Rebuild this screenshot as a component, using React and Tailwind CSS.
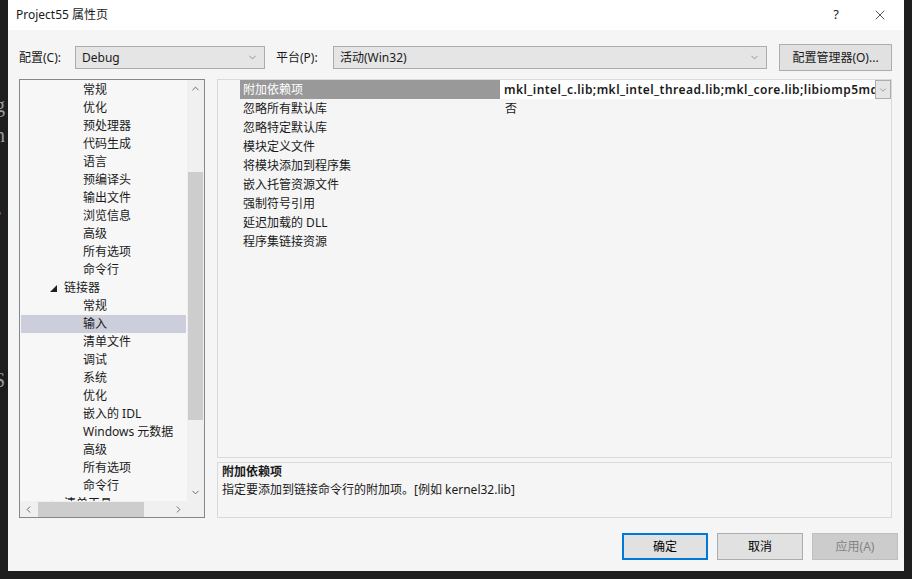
import { ChevronDown, ChevronUp, ChevronLeft, ChevronRight, X } from 'lucide-react';

const FONT = "font-['Noto_Sans','Noto_Sans_CJK_SC',sans-serif]";

const TREE = [
  { label: '常规', level: 2 },
  { label: '优化', level: 2 },
  { label: '预处理器', level: 2 },
  { label: '代码生成', level: 2 },
  { label: '语言', level: 2 },
  { label: '预编译头', level: 2 },
  { label: '输出文件', level: 2 },
  { label: '浏览信息', level: 2 },
  { label: '高级', level: 2 },
  { label: '所有选项', level: 2 },
  { label: '命令行', level: 2 },
  { label: '链接器', level: 1, open: true },
  { label: '常规', level: 2 },
  { label: '输入', level: 2, selected: true },
  { label: '清单文件', level: 2 },
  { label: '调试', level: 2 },
  { label: '系统', level: 2 },
  { label: '优化', level: 2 },
  { label: '嵌入的 IDL', level: 2 },
  { label: 'Windows 元数据', level: 2 },
  { label: '高级', level: 2 },
  { label: '所有选项', level: 2 },
  { label: '命令行', level: 2 },
  { label: '清单工具', level: 1, open: false },
];

const PROPS = [
  '附加依赖项',
  '忽略所有默认库',
  '忽略特定默认库',
  '模块定义文件',
  '将模块添加到程序集',
  '嵌入托管资源文件',
  '强制符号引用',
  '延迟加载的 DLL',
  '程序集链接资源',
];

function Combo({ value, width }) {
  return (
    <div className={`${width} h-[23px] flex items-center bg-[#e5e5e5] border border-[#acacac] pl-[6px] pr-[6px]`}>
      <span className="flex-1 whitespace-nowrap">{value}</span>
      <ChevronDown size={11} strokeWidth={1.5} className="text-[#6d6d6d]" />
    </div>
  );
}

function TreeRow({ item }) {
  return (
    <div
      className={`h-[18px] flex items-center mx-[1px] whitespace-nowrap ${item.selected ? 'bg-[#cccedb]' : ''}`}
    >
      {item.level === 1 ? (
        <>
          <div className="w-[29px]" />
          {item.open ? (
            <svg width="7" height="7" viewBox="0 0 7 7" className="mr-[7px]">
              <polygon points="7,0 7,7 0,7" fill="#1e1e1e" />
            </svg>
          ) : (
            <svg width="7" height="9" viewBox="0 0 7 9" className="mr-[7px]">
              <polygon points="1,1 6,4.5 1,8" fill="none" stroke="#555" />
            </svg>
          )}
          <span>{item.label}</span>
        </>
      ) : (
        <span className="pl-[62px]">{item.label}</span>
      )}
    </div>
  );
}

function TreePanel() {
  return (
    <div className="w-[186px] h-[439px] border border-[#828790] bg-[#f7f7f7] flex flex-col">
      <div className="flex h-[421px]">
        <div className="flex-1 overflow-hidden pt-[1px]">
          {TREE.map((t, i) => (
            <TreeRow key={i} item={t} />
          ))}
        </div>
        <div className="w-[17px] bg-[#f0f0f0] flex flex-col items-center">
          <div className="h-[17px] flex items-center justify-center">
            <ChevronUp size={11} strokeWidth={2} className="text-[#606060]" />
          </div>
          <div className="flex-1 w-full flex flex-col items-center">
            <div className="h-[75px]" />
            <div className="w-[15px] h-[248px] bg-[#cdcdcd]" />
          </div>
          <div className="h-[17px] flex items-center justify-center">
            <ChevronDown size={11} strokeWidth={2} className="text-[#606060]" />
          </div>
        </div>
      </div>
      <div className="flex h-[16px] bg-[#f0f0f0]">
        <div className="w-[17px] flex items-center justify-center">
          <ChevronLeft size={11} strokeWidth={2} className="text-[#606060]" />
        </div>
        <div className="w-[150px] flex items-center">
          <div className="ml-[1px] w-[106px] h-[15px] bg-[#cdcdcd]" />
        </div>
        <div className="w-[17px] flex items-center justify-center -ml-[17px]">
          <ChevronRight size={11} strokeWidth={2} className="text-[#606060]" />
        </div>
        <div className="w-[17px] ml-auto bg-[#f0f0f0]" />
      </div>
    </div>
  );
}

function GridPanel() {
  return (
    <div className="w-[675px] h-[379px] border border-[#d9d9d9] bg-[#f5f5f5]">
      {PROPS.map((p, i) => (
        <div key={i} className="h-[19px] flex">
          <div className="w-[22px]" />
          <div
            className={`w-[260px] pl-[3px] flex items-center whitespace-nowrap ${i === 0 ? 'bg-[#999999] text-white' : ''}`}
          >
            {p}
          </div>
          {i === 0 ? (
            <div className="flex-1 flex items-stretch bg-white min-w-0">
              <div className="flex-1 min-w-0 overflow-hidden whitespace-nowrap pl-[4px] font-semibold tracking-[0.45px] flex items-center">
                mkl_intel_c.lib;mkl_intel_thread.lib;mkl_core.lib;libiomp5md.lib
              </div>
              <div className="w-[16px] border border-[#acacac] bg-[#e5e5e5] flex items-center justify-center">
                <ChevronDown size={10} strokeWidth={1.5} className="text-[#6d6d6d]" />
              </div>
            </div>
          ) : (
            <div className="flex-1 pl-[5px] flex items-center">{i === 1 ? '否' : ''}</div>
          )}
        </div>
      ))}
    </div>
  );
}

function DescPanel() {
  return (
    <div className="w-[675px] h-[56px] border border-[#d9d9d9] bg-[#f5f5f5] pl-[4px] pt-[0px]">
      <div className="h-[18px] flex items-center font-bold">附加依赖项</div>
      <div className="h-[18px] flex items-center">指定要添加到链接命令行的附加项。[例如 kernel32.lib]</div>
    </div>
  );
}

function Button({ children, kind }) {
  const styles = {
    primary: 'border-2 border-[#0078d7] bg-[#e1e1e1] text-black',
    normal: 'border border-[#adadad] bg-[#e1e1e1] text-black',
    disabled: 'border border-[#bfbfbf] bg-[#cccccc] text-[#838383]',
  };
  return (
    <div className={`w-[86px] h-[27px] flex items-center justify-center ${styles[kind]}`}>{children}</div>
  );
}

export default function App() {
  return (
    <div className={`w-[912px] h-[579px] bg-[#1e1e1e] flex overflow-hidden ${FONT} text-[12px] text-[#1a1a1a]`}>
      <div className="w-[8px] flex flex-col overflow-hidden text-[#9a9a9a] text-[20px] leading-[30px] font-['Liberation_Serif',serif]">
        <div className="h-[90px]" />
        <div className="-ml-[5px]">g</div>
        <div className="-ml-[5px]">n</div>
        <div className="h-[50px]" />
        <div className="-ml-[6px] text-[#b06060]">r</div>
        <div className="h-[135px]" />
        <div className="-ml-[6px]">S</div>
      </div>
      <div className="w-[896px] h-[571px] bg-[#f5f5f5] flex flex-col">
        <div className="h-[30px] bg-white flex items-center pl-[8px]">
          <span>Project55 属性页</span>
          <div className="ml-auto flex mr-[2px]">
            <div className="w-[44px] flex items-center justify-center text-[13px]">?</div>
            <div className="w-[44px] flex items-center justify-center">
              <X size={16} strokeWidth={1} className="text-black" />
            </div>
          </div>
        </div>
        <div className="mt-[14px] h-[27px] flex items-center pl-[11px]">
          <div className="w-[56px] whitespace-nowrap">配置(C):</div>
          <Combo value="Debug" width="w-[190px]" />
          <div className="w-[57px] ml-[11px] whitespace-nowrap">平台(P):</div>
          <Combo value="活动(Win32)" width="w-[434px]" />
          <div className="ml-[12px] w-[113px] h-[27px] border border-[#adadad] bg-[#e1e1e1] flex items-center justify-center whitespace-nowrap">
            配置管理器(O)...
          </div>
        </div>
        <div className="mt-[8px] flex pl-[11px] gap-[12px]">
          <TreePanel />
          <div className="flex flex-col gap-[4px]">
            <GridPanel />
            <DescPanel />
          </div>
        </div>
        <div className="mt-[15px] flex pl-[614px] gap-[9px]">
          <Button kind="primary">确定</Button>
          <Button kind="normal">取消</Button>
          <Button kind="disabled">应用(A)</Button>
        </div>
      </div>
    </div>
  );
}
